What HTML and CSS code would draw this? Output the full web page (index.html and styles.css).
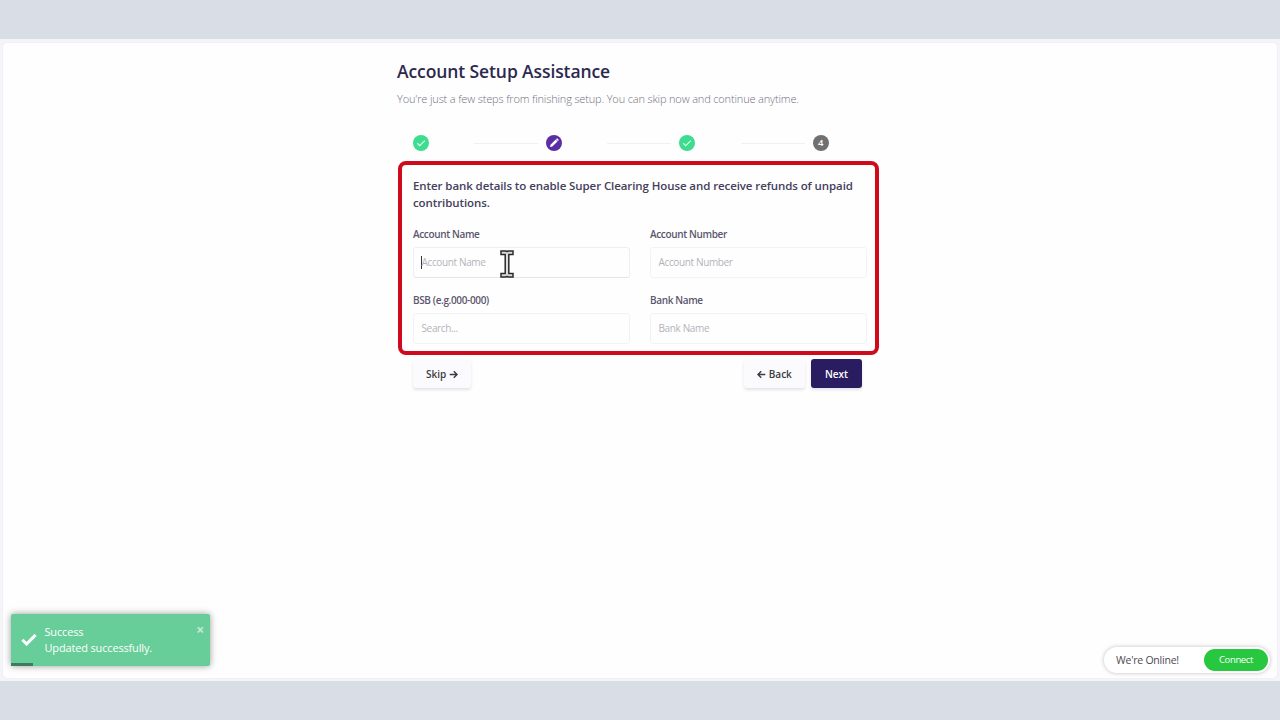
FILE: index.html
```html
<!DOCTYPE html>
<html>
<head>
	<meta charset="utf-8">
	<title>Account Setup Assistance</title>
	<link rel="stylesheet" href="styles.css">
</head>
<body>
	<div class="page">
		<div class="card">
			<div class="wizard">
				<h1>Account Setup Assistance</h1>
				<p class="intro">You're just a few steps from finishing setup. You can skip now and continue anytime.</p>

				<div class="steps">
					<span class="step done">
						<svg viewBox="0 0 16 16"><path d="M4.2 8.3l2.5 2.4 5.2-5.1" fill="none" stroke="#d5ffe9" stroke-width="1.2"/></svg>
					</span>
					<span class="line"></span>
					<span class="step current">
						<svg viewBox="0 0 16 16"><path d="M4 12.1l.5-2.3 5.2-5.2 1.8 1.8-5.2 5.2zM10 4.3l.7-.7q.4-.3.8 0l1 1q.3.4 0 .8l-.7.7z" fill="#fff"/></svg>
					</span>
					<span class="line"></span>
					<span class="step done">
						<svg viewBox="0 0 16 16"><path d="M4.2 8.3l2.5 2.4 5.2-5.1" fill="none" stroke="#d5ffe9" stroke-width="1.2"/></svg>
					</span>
					<span class="line"></span>
					<span class="step">4</span>
				</div>

				<form class="bank">
					<h2>Enter bank details to enable Super Clearing House and receive refunds of unpaid contributions.</h2>
					<div class="fields">
						<div class="field">
							<label>Account Name</label>
							<div class="input focus"><i class="caret"></i>Account Name</div>
						</div>
						<div class="field">
							<label>Account Number</label>
							<div class="input">Account Number</div>
						</div>
						<div class="field">
							<label>BSB (e.g.000-000)</label>
							<div class="input">Search...</div>
						</div>
						<div class="field">
							<label>Bank Name</label>
							<div class="input">Bank Name</div>
						</div>
					</div>
				</form>

				<div class="buttons">
					<a class="btn skip">Skip <svg viewBox="0 0 10 10"><path d="M.8 5h8M5.3 1.3L9 5 5.3 8.7"/></svg></a>
					<a class="btn back"><svg viewBox="0 0 10 10"><path d="M9.2 5h-8M4.7 1.3L1 5l3.7 3.7"/></svg> Back</a>
					<a class="btn next">Next</a>
				</div>
			</div>
		</div>
	</div>

	<!-- mouse pointer -->
	<svg class="cursor" viewBox="0 0 14 28"><path d="M1 1h5l1 .6L8 1h5v3.4H8.8v19.2H13V27H8l-1-.6L6 27H1v-3.4h4.2V4.4H1z" fill="#ddd" stroke="#2b2b2b" stroke-width="1.5"/></svg>

	<div class="toast">
		<svg class="tick" viewBox="0 0 16 13"><path d="M1.4 6.8l4.2 4.2 9-9.1" fill="none" stroke="#fff" stroke-width="3"/></svg>
		<div class="message">
			<div>Success</div>
			<div>Updated successfully.</div>
		</div>
		<span class="close">×</span>
		<span class="progress"></span>
	</div>

	<div class="chat">
		<span class="status">We're Online!</span>
		<span class="connect">Connect</span>
	</div>
</body>
</html>
```
FILE: styles.css
```css
* {
	box-sizing: border-box;
}

body {
	margin: 0;
	height: 720px;
	padding: 39px 0;
	overflow: hidden;
	background-color: #d9dde6;
	font-family: "Open Sans", "Noto Sans", sans-serif;
	color: #45405c;
}

.page {
	height: 642px;
	padding: 3px 2px;
	background-color: #f5f5f9;
}

.card {
	height: 637px;
	border-radius: 5px;
	background-color: #fefefe;
	border: 1px solid #f0f0f5;
}

.wizard {
	width: 482px;
	margin-left: 394px;
	padding-top: 16px;
}

.wizard h1 {
	margin: 0;
	font-size: 17.5px;
	line-height: 24px;
	font-weight: 600;
	letter-spacing: -0.1px;
	color: #2d2850;
}

.intro {
	margin: 7px 0 0;
	font-size: 11px;
	line-height: 18px;
	font-weight: 300;
	letter-spacing: -0.155px;
	color: #737080;
	white-space: nowrap;
}

.steps {
	display: flex;
	align-items: center;
	margin: 27px 0 0 15.5px;
	width: 417px;
	height: 16px;
}

.step {
	width: 16px;
	height: 16px;
	border-radius: 50%;
	background-color: #707070;
	color: #fff;
	font-size: 9.5px;
	line-height: 16px;
	font-weight: 600;
	text-align: center;
}

.step svg {
	display: block;
}

.done {
	background-color: #3edc8f;
}

.current {
	background-color: #5b2ea6;
}

.line {
	width: 64px;
	height: 1px;
	margin: 0 8px 0 45.4px;
	background-color: #f0f0f2;
}

.bank {
	width: 481px;
	height: 194px;
	margin: 10px 0 0 1px;
	padding: 12px 0 0 11px;
	border: 4px solid #cf0a1c;
	border-radius: 8px;
}

.bank h2 {
	margin: 0;
	width: 450px;
	font-size: 11.5px;
	line-height: 17px;
	font-weight: 600;
	letter-spacing: -0.09px;
	color: #45405c;
}

.fields {
	display: grid;
	grid-template-columns: 217px 217px;
	column-gap: 20px;
	row-gap: 14px;
	margin-top: 15px;
}

.field label {
	display: block;
	font-size: 10px;
	line-height: 16px;
	font-weight: 600;
	letter-spacing: -0.36px;
	color: #5b566e;
}

.input {
	height: 31px;
	margin-top: 5px;
	padding-left: 7.5px;
	border: 1px solid #f3f3f5;
	border-radius: 3px;
	font-size: 10px;
	line-height: 29px;
	letter-spacing: -0.36px;
	color: #b4b3ba;
}

.focus {
	border-color: #efeff2;
	border-bottom-color: #e6e6ea;
}

.caret {
	display: inline-block;
	width: 1px;
	height: 13px;
	margin-left: -1px;
	vertical-align: -3px;
	background-color: #333;
}

.buttons {
	display: flex;
	align-items: center;
	margin: 4px 0 0 16px;
	width: 449px;
}

.btn {
	height: 29px;
	border-radius: 3px;
	background-color: #fbfafd;
	box-shadow: 0 2px 3px rgba(60, 50, 90, 0.13);
	font-size: 10px;
	line-height: 30px;
	font-weight: 600;
	text-align: center;
	color: #3c3a42;
}

.btn svg {
	width: 9px;
	height: 9px;
	vertical-align: -1px;
	fill: none;
	stroke: #3c3a42;
	stroke-width: 1.6;
}

.skip {
	width: 58px;
	margin-right: auto;
}

.back {
	width: 61px;
	margin-right: 6px;
}

.next {
	width: 51px;
	background-color: #2a1c60;
	color: #fff;
}

.cursor {
	position: absolute;
	left: 500px;
	top: 250px;
	width: 14px;
	height: 28px;
}

.toast {
	position: absolute;
	left: 11px;
	top: 614px;
	display: flex;
	width: 199px;
	height: 52px;
	padding: 10px 6px 0 10px;
	border-radius: 2px;
	background-color: #67cd99;
	box-shadow: 0 0 7px rgba(0, 0, 0, 0.4);
	font-size: 11px;
	line-height: 16px;
	letter-spacing: -0.16px;
	color: #fff;
}

.tick {
	width: 16px;
	height: 13px;
	margin: 9px 7.5px 0 0;
}

.close {
	margin-left: auto;
	margin-top: -2px;
	font-size: 14px;
	font-weight: 700;
	opacity: 0.6;
}

.progress {
	position: absolute;
	left: 0;
	bottom: 0;
	width: 22px;
	height: 3px;
	background-color: #3f7c5e;
}

.chat {
	position: absolute;
	left: 1104px;
	top: 647px;
	display: flex;
	align-items: center;
	justify-content: space-between;
	width: 166px;
	height: 26px;
	padding: 0 2px 0 12px;
	border-radius: 13px;
	background-color: #fff;
	box-shadow: 0 0 4px rgba(0, 0, 0, 0.25);
	font-size: 10.5px;
	letter-spacing: -0.23px;
	color: #4c4a52;
}

.connect {
	width: 64px;
	height: 22px;
	border-radius: 11px;
	background-color: #27c840;
	color: #fff;
	font-size: 9.5px;
	line-height: 22px;
	letter-spacing: -0.35px;
	text-align: center;
}
```
